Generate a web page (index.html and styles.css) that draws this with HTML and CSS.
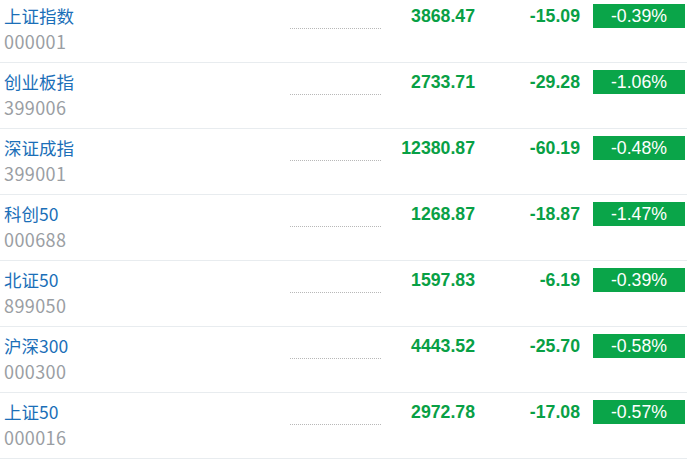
FILE: index.html
```html
<!DOCTYPE html>
<html lang="zh-CN">
<head>
<meta charset="utf-8">
<title>指数</title>
<link rel="stylesheet" href="styles.css">
</head>
<body>
<div class="list">
  <div class="row">
    <div class="name"><a class="title">上证指数</a><span class="code">000001</span></div>
    <div class="spark"><span class="dots"></span></div>
    <div class="price">3868.47</div>
    <div class="chg">-15.09</div>
    <div class="pct"><span class="badge">-0.39%</span></div>
  </div>
  <div class="row">
    <div class="name"><a class="title">创业板指</a><span class="code">399006</span></div>
    <div class="spark"><span class="dots"></span></div>
    <div class="price">2733.71</div>
    <div class="chg">-29.28</div>
    <div class="pct"><span class="badge">-1.06%</span></div>
  </div>
  <div class="row">
    <div class="name"><a class="title">深证成指</a><span class="code">399001</span></div>
    <div class="spark"><span class="dots"></span></div>
    <div class="price">12380.87</div>
    <div class="chg">-60.19</div>
    <div class="pct"><span class="badge">-0.48%</span></div>
  </div>
  <div class="row">
    <div class="name"><a class="title">科创50</a><span class="code">000688</span></div>
    <div class="spark"><span class="dots"></span></div>
    <div class="price">1268.87</div>
    <div class="chg">-18.87</div>
    <div class="pct"><span class="badge">-1.47%</span></div>
  </div>
  <div class="row">
    <div class="name"><a class="title">北证50</a><span class="code">899050</span></div>
    <div class="spark"><span class="dots"></span></div>
    <div class="price">1597.83</div>
    <div class="chg">-6.19</div>
    <div class="pct"><span class="badge">-0.39%</span></div>
  </div>
  <div class="row">
    <div class="name"><a class="title">沪深300</a><span class="code">000300</span></div>
    <div class="spark"><span class="dots"></span></div>
    <div class="price">4443.52</div>
    <div class="chg">-25.70</div>
    <div class="pct"><span class="badge">-0.58%</span></div>
  </div>
  <div class="row">
    <div class="name"><a class="title">上证50</a><span class="code">000016</span></div>
    <div class="spark"><span class="dots"></span></div>
    <div class="price">2972.78</div>
    <div class="chg">-17.08</div>
    <div class="pct"><span class="badge">-0.57%</span></div>
  </div>
</div>
</body>
</html>
```
FILE: styles.css
```css
html, body {
  margin: 0;
  padding: 0;
  background: #ffffff;
}
body {
  font-family: "Noto Sans CJK SC", "Microsoft YaHei", sans-serif;
  overflow: hidden;
}
.list {
  margin-top: -3px;
}
.row {
  display: flex;
  align-items: flex-start;
  height: 65px;
  border-bottom: 1px solid #e8ecef;
  padding-left: 4px;
}
.name {
  width: 286px;
  display: flex;
  flex-direction: column;
  padding-top: 7px;
}
.title {
  font-size: 17.5px;
  line-height: 24px;
  color: #1b6fb8;
  text-decoration: none;
}
.code {
  font-size: 18px;
  letter-spacing: 0.4px;
  line-height: 26px;
  color: #9a9ea3;
}
.spark {
  width: 91px;
  padding-top: 31px;
}
.dots {
  display: block;
  border-top: 1px dotted #b8b8b8;
}
.price, .chg {
  font-family: "Liberation Sans", Arial, sans-serif;
  font-weight: bold;
  font-size: 17.7px;
  line-height: 24px;
  color: #08a045;
  text-align: right;
  padding-top: 7px;
}
.price {
  width: 94px;
}
.chg {
  width: 105px;
}
.pct {
  padding-top: 7px;
  padding-left: 13px;
}
.badge {
  display: block;
  width: 92px;
  height: 24px;
  line-height: 24px;
  background: #0aa549;
  color: #ffffff;
  text-align: center;
  font-family: "Liberation Sans", Arial, sans-serif;
  font-size: 17.7px;
}
```
